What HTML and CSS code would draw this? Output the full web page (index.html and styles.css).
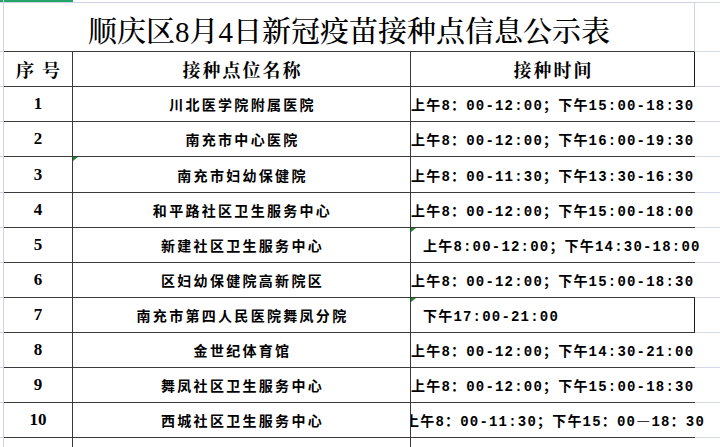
FILE: index.html
```html
<!DOCTYPE html>
<html lang="zh-CN">
<head>
<meta charset="utf-8">
<title>顺庆区8月4日新冠疫苗接种点信息公示表</title>
<link rel="stylesheet" href="styles.css">
</head>
<body>
<div class="sheet">
  <div class="row top"><div class="c0 sel"></div><div class="ca sel"></div><div class="cb"></div><div class="cc"></div><div class="cd"></div></div>
  <div class="row title-row"><div class="c0"></div><div class="title">顺庆区8月4日新冠疫苗接种点信息公示表</div><div class="cd"></div></div>
  <div class="row head"><div class="c0"></div><div class="ca hdr seq"><span>序</span><span>号</span></div><div class="cb hdr">接种点位名称</div><div class="cc hdr boxed">接种时间</div><div class="cd"></div></div>

  <div class="row data"><div class="c0"></div><div class="ca num">1</div><div class="cb name">川北医学院附属医院</div><div class="cc time">上午8：00-12:00；下午15:00-18:30</div><div class="cd"></div></div>
  <div class="row data"><div class="c0"></div><div class="ca num">2</div><div class="cb name">南充市中心医院</div><div class="cc time">上午8：00-12:00；下午16:00-19:30</div><div class="cd"></div></div>
  <div class="row data tall"><div class="c0"></div><div class="ca num">3</div><div class="cb name mark">南充市妇幼保健院</div><div class="cc time">上午8：00-11:30；下午13:30-16:30</div><div class="cd"></div></div>
  <div class="row data"><div class="c0"></div><div class="ca num">4</div><div class="cb name">和平路社区卫生服务中心</div><div class="cc time">上午8：00-12:00；下午15:00-18:00</div><div class="cd"></div></div>
  <div class="row data"><div class="c0"></div><div class="ca num">5</div><div class="cb name">新建社区卫生服务中心</div><div class="cc time indent mark">上午8:00-12:00；下午14:30-18:00</div><div class="cd"></div></div>
  <div class="row data"><div class="c0"></div><div class="ca num">6</div><div class="cb name">区妇幼保健院高新院区</div><div class="cc time">上午8：00-12:00；下午15:00-18:30</div><div class="cd"></div></div>
  <div class="row data"><div class="c0"></div><div class="ca num">7</div><div class="cb name">南充市第四人民医院舞凤分院</div><div class="cc time indent mark boxed">下午17:00-21:00</div><div class="cd"></div></div>
  <div class="row data"><div class="c0"></div><div class="ca num">8</div><div class="cb name">金世纪体育馆</div><div class="cc time">上午8：00-12:00；下午14:30-21:00</div><div class="cd"></div></div>
  <div class="row data"><div class="c0"></div><div class="ca num">9</div><div class="cb name">舞凤社区卫生服务中心</div><div class="cc time">上午8：00-12:00；下午15:00-18:30</div><div class="cd"></div></div>
  <div class="row data"><div class="c0"></div><div class="ca num">10</div><div class="cb name">西城社区卫生服务中心</div><div class="cc time clip"><span class="shift">上午8：00-11:30；下午15：00<span class="cjk">—</span>18：30</span></div><div class="cd"></div></div>
  <div class="row last"><div class="c0"></div><div class="ca"></div><div class="cb"></div><div class="cc"></div><div class="cd"></div></div>
</div>
</body>
</html>
```

FILE: styles.css
```css
html, body {
  margin: 0;
  padding: 0;
  background: #ffffff;
  overflow: hidden;
  width: 720px;
  height: 447px;
}

.sheet {
  width: 760px;
  color: #000;
}

.row {
  display: grid;
  grid-template-columns: 4px 69px 338px 284px 1fr;
  box-sizing: border-box;
}

.row > div {
  box-sizing: border-box;
  border-bottom: 1px solid #3a3a3a;
  position: relative;
  min-width: 0;
  display: flex;
  align-items: center;
}

.row > .c0 {
  border-right: 1px solid #cdd2e4;
  border-bottom-color: #cdd2e4;
}

.row > .cd {
  border-bottom-color: #d4d8e8;
}

.ca, .cb {
  border-right: 1px solid #3a3a3a;
}

.top { height: 3px; }
.top > div { border-bottom-color: #cdd2e4; border-right: none; }
.top > .sel { background: linear-gradient(#22a567 0 2px, transparent 2px); }

.title-row { height: 49px; }
.title {
  grid-column: span 3;
  border-right: 1px solid #cdd2e4;
  justify-content: center;
  padding-top: 4px;
  font-family: "Liberation Serif", "Noto Serif CJK SC", "Noto Sans CJK SC", serif;
  font-size: 29px;
  font-weight: 500;
  white-space: nowrap;
}

.head { height: 35px; }
.data { height: 35px; }
.data.tall { height: 36px; }
.last { height: 20px; }
.last > div { border-bottom: none; }

.hdr {
  justify-content: center;
  font-family: "Liberation Serif", "Noto Serif CJK SC", "Noto Sans CJK SC", serif;
  font-size: 18px;
  font-weight: 700;
  letter-spacing: 2px;
  padding-left: 2px;
}

.seq {
  gap: 8px;
  letter-spacing: 0;
  padding-left: 0;
}

.boxed {
  border-right: 1px solid #1a1a1a;
}

.num {
  justify-content: center;
  font-family: "Liberation Serif", serif;
  font-weight: 700;
  font-size: 17px;
}

.name {
  justify-content: center;
  padding-left: 2px;
  font-family: "Noto Sans CJK SC", sans-serif;
  font-weight: 700;
  font-size: 14px;
  letter-spacing: 2.3px;
  white-space: nowrap;
}

.time {
  font-family: "Liberation Mono", "Noto Sans CJK SC", monospace;
  font-weight: 700;
  font-size: 14px;
  letter-spacing: 1.2px;
  white-space: nowrap;
  overflow: visible;
}

.cjk {
  font-family: "Noto Sans CJK SC", sans-serif;
}

.indent { padding-left: 12px; }

.clip {
  clip-path: inset(0 -200px 0 0);
}

.shift {
  margin-left: -6px;
}

.mark::before {
  content: "";
  position: absolute;
  left: 0;
  top: 0;
  border-top: 4px solid #1f8a2d;
  border-right: 5px solid transparent;
}
```
